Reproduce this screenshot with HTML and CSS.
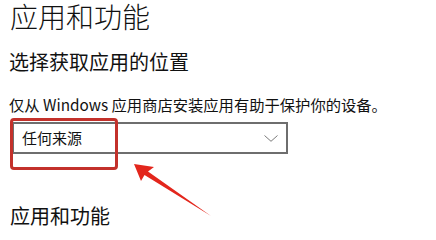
FILE: index.html
```html
<!DOCTYPE html>
<html lang="zh-CN">
<head>
<meta charset="utf-8">
<link rel="stylesheet" href="styles.css">
</head>
<body>
<div class="page">
  <h1 class="title">应用和功能</h1>
  <h2 class="subtitle">选择获取应用的位置</h2>
  <p class="desc">仅从 Windows 应用商店安装应用有助于保护你的设备。</p>
  <div class="select">
    <span class="select-value">任何来源</span>
    <svg class="chevron" width="14" height="7" viewBox="0 0 14 7"><path d="M0.5 0.5 L7 6.3 L13.5 0.5" fill="none" stroke="#7a7a7a" stroke-width="1"/></svg>
  </div>
  <h2 class="section">应用和功能</h2>
</div>
<div class="highlight"></div>
<svg class="arrow" width="436" height="227" viewBox="0 0 436 227">
  <polygon points="134,164 154,167 148,171.5 211,216 144.5,175 141,181" fill="#e3261c"/>
</svg>
</body>
</html>
```
FILE: styles.css
```css
html, body {
  margin: 0;
  padding: 0;
  background: #ffffff;
}
body {
  width: 436px;
  height: 227px;
  overflow: hidden;
  position: relative;
  font-family: "Noto Sans CJK SC", "Noto Sans", sans-serif;
  color: #111111;
}
.page {
  padding: 0 0 0 9px;
  display: flex;
  flex-direction: column;
  align-items: flex-start;
}
.title {
  margin: 0 0 0 1px;
  font-size: 28px;
  font-weight: 300;
  line-height: 32px;
}
.subtitle {
  margin: 18px 0 0 0;
  font-size: 20px;
  font-weight: 400;
  line-height: 24px;
}
.desc {
  margin: 20px 0 0 0;
  font-size: 15.3px;
  line-height: 20px;
}
.select {
  margin: 8px 0 0 3px;
  box-sizing: border-box;
  width: 276px;
  height: 32px;
  border: 2px solid #6e6e6e;
  display: flex;
  align-items: center;
  justify-content: space-between;
  padding: 0 8px 0 8px;
}
.select-value {
  font-size: 15px;
  line-height: 20px;
  color: #111111;
}
.chevron {
  display: block;
}
.section {
  margin: 50px 0 0 1px;
  font-size: 20px;
  font-weight: 400;
  line-height: 24px;
}
.highlight {
  position: absolute;
  left: 10px;
  top: 118px;
  width: 108px;
  height: 52px;
  box-sizing: border-box;
  border: 3px solid #c3312b;
  border-radius: 4px;
}
.arrow {
  position: absolute;
  left: 0;
  top: 0;
}
```
